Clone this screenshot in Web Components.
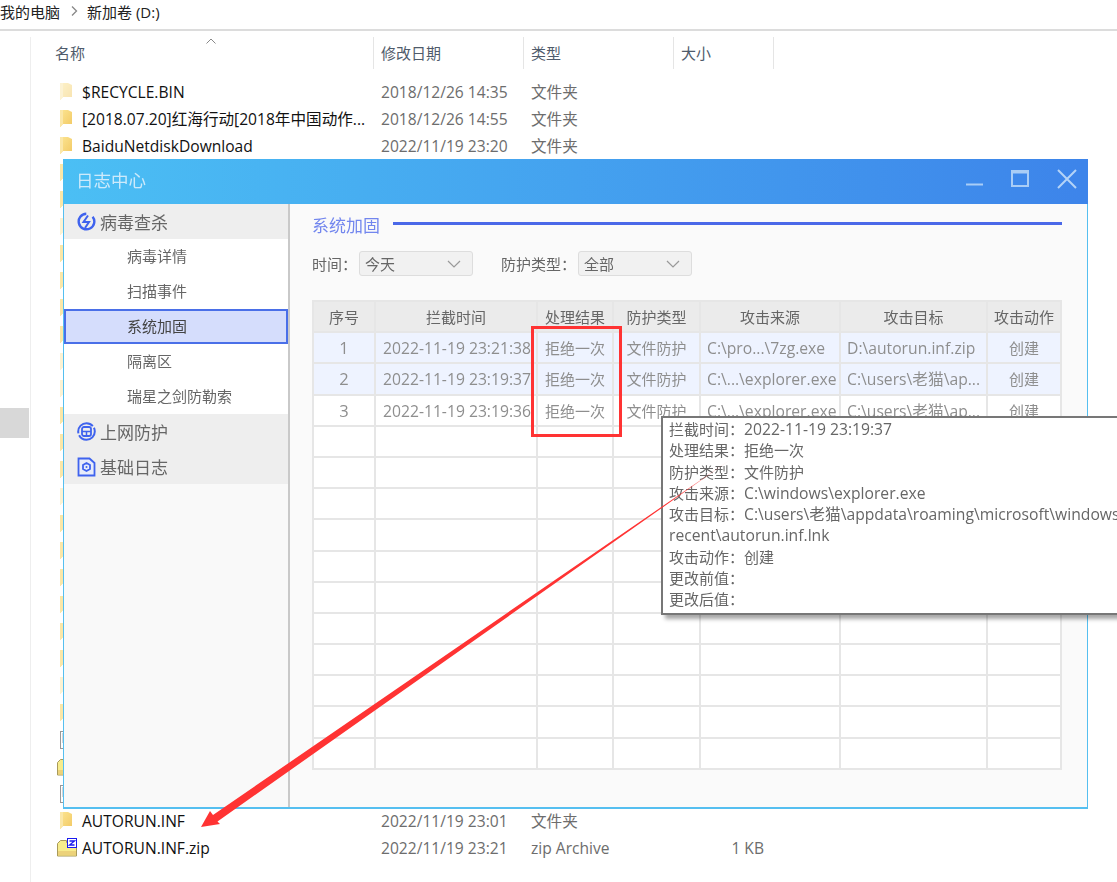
<!DOCTYPE html>
<html lang="zh-CN">
<head>
<meta charset="utf-8">
<title>日志中心</title>
<style>
  html, body { margin: 0; height: 882px; overflow: hidden; background: #fff; }
  body { position: relative; font-family: "Open Sans", "Noto Sans CJK SC", sans-serif; font-size: 15px; }
  log-tooltip span { font-size: 15.700px; }
</style>
</head>
<body>
<file-explorer>
  <file-row name="$RECYCLE.BIN" date="2018/12/26 14:35" type="文件夹" pale></file-row>
  <file-row name="[2018.07.20]红海行动[2018年中国动作..." date="2018/12/26 14:55" type="文件夹"></file-row>
  <file-row name="BaiduNetdiskDownload" date="2022/11/19 23:20" type="文件夹"></file-row>
  <file-row></file-row><file-row></file-row><file-row pale></file-row><file-row></file-row><file-row></file-row>
  <file-row></file-row><file-row></file-row><file-row pale></file-row><file-row pale></file-row><file-row></file-row>
  <file-row></file-row><file-row></file-row><file-row pale></file-row><file-row></file-row><file-row></file-row>
  <file-row></file-row><file-row></file-row><file-row></file-row><file-row></file-row><file-row pale></file-row>
  <file-row></file-row><file-row kind="doc"></file-row><file-row kind="zip"></file-row><file-row kind="doc"></file-row>
  <file-row name="AUTORUN.INF" date="2022/11/19 23:01" type="文件夹"></file-row>
  <file-row name="AUTORUN.INF.zip" date="2022/11/19 23:21" type="zip Archive" size="1 KB" kind="zip"></file-row>
</file-explorer>

<log-window title-text="日志中心">
  <log-sidebar slot="side"></log-sidebar>
  <log-panel heading="系统加固"></log-panel>
</log-window>

<log-tooltip>
  <div>拦截时间：<span>2022-11-19 23:19:37</span></div>
  <div>处理结果：拒绝一次</div>
  <div>防护类型：文件防护</div>
  <div>攻击来源：<span>C:\windows\explorer.exe</span></div>
  <div>攻击目标：<span>C:\users\老猫\appdata\roaming\microsoft\windows\</span></div>
  <div><span>recent\autorun.inf.lnk</span></div>
  <div>攻击动作：创建</div>
  <div>更改前值：</div>
  <div>更改后值：</div>
</log-tooltip>

<red-markup></red-markup>

<script>
const folderIcon = `
  <svg width="20" height="20" viewBox="0 0 20 20">
    <defs><linearGradient id="f" x1="0" x2="1" y1="0" y2="1"><stop offset="0" stop-color="#fce592"/><stop offset="1" stop-color="#f2c964"/></linearGradient></defs>
    <path d="M3 1h8l4 2v12h-9l-3 3z" fill="url(#f)"/>
    <path d="M3 1h3v14l-2.500 3h-.5z" fill="#fbe7a8"/>
  </svg>`
const docIcon = `
  <svg width="20" height="20" viewBox="0 0 20 20">
    <rect x="3.500" y="1.500" width="13" height="17" fill="#fff" stroke="#999"/>
    <path d="M5 4h2M5 6h2M5 8h2M5 10h2M5 12h2" stroke="#aaa"/>
  </svg>`
const zipIcon = `
  <svg width="20" height="20" viewBox="0 0 20 20">
    <path d="M.5 5.500l3-3h6v2h10v13.500h-19z" fill="#f7ec8c" stroke="#a89a5a"/>
    <path d="M1 13h18v4.500h-18z" fill="#ecd27a"/>
    <rect x="10.500" y=".5" width="9" height="9" fill="#fff" stroke="#1a1af0"/>
    <path d="M12.500 3h5l-5 4h5" fill="none" stroke="#1a1af0" stroke-width="1.300"/>
  </svg>`

class FileExplorer extends HTMLElement {
  connectedCallback() {
    this.attachShadow({ mode: "open" }).innerHTML = `
      <style>
        :host { display: block; height: 882px; overflow: hidden; }
        .crumb { height: 20px; padding: 1px 0 8px; border-bottom: 2px solid #dcdcdc; display: flex; align-items: center; gap: 9px; color: #222; }
        .crumb svg { display: block; margin-right: -1px; }
        .wrap { display: flex; }
        nav { width: 31px; box-sizing: border-box; border-right: 1px solid #eee; margin-top: 6px; height: 860px; padding-top: 371px; }
        nav i { display: block; width: 29px; height: 30px; background: #d8d8d8; }
        main { flex: 1; }
        .cols { display: flex; height: 32px; margin-top: 6px; color: #4f5b6b; }
        .cols span { box-sizing: border-box; border-right: 1px solid #e5e5e5; padding-left: 7px; line-height: 32px; position: relative; }
        .cols span:first-child { width: 343px; padding-left: 24px; }
        .cols span:nth-child(2), .cols span:nth-child(3) { width: 150px; }
        .cols span:nth-child(4) { width: 100px; }
        .cols svg { position: absolute; left: 175px; top: 1px; }
        .rows { padding-top: 9px; }
      </style>
      <div class="crumb">
        <span>我的电脑</span>
        <svg width="10" height="12" viewBox="0 0 10 12"><path d="M3 1.500l4.500 4.500-4.500 4.500" fill="none" stroke="#888" stroke-width="1.300"/></svg>
        <span>新加卷 (D:)</span>
      </div>
      <div class="wrap">
        <nav><i></i></nav>
        <main>
          <div class="cols">
            <span>名称<svg width="10" height="6" viewBox="0 0 10 6"><path d="M.5 5.500l4.500-4.500 4.500 4.500" fill="none" stroke="#888"/></svg></span>
            <span>修改日期</span><span>类型</span><span>大小</span>
          </div>
          <div class="rows"><slot></slot></div>
        </main>
      </div>`
  }
}
customElements.define("file-explorer", FileExplorer)

class FileRow extends HTMLElement {
  connectedCallback() {
    const a = n => this.getAttribute(n) || ""
    const icon = a("kind") === "doc" ? docIcon : a("kind") === "zip" ? zipIcon : folderIcon
    this.attachShadow({ mode: "open" }).innerHTML = `
      <style>
        :host { display: grid; grid-template-columns: 20px 304px 150px 150px 83px; height: 27px; align-items: center; margin-left: 26px; color: #6d6d6d; font-size: 15.600px; }
        .ic { height: 20px; ${this.hasAttribute("pale") ? "opacity:.5;" : ""} }
        .name { color: #111; padding-left: 5px; white-space: nowrap; }
        .size { text-align: right; }
      </style>
      <div class="ic">${icon}</div>
      <div class="name">${a("name")}</div>
      <div>${a("date")}</div>
      <div>${a("type")}</div>
      <div class="size">${a("size")}</div>`
  }
}
customElements.define("file-row", FileRow)

class LogWindow extends HTMLElement {
  connectedCallback() {
    this.attachShadow({ mode: "open" }).innerHTML = `
      <style>
        :host { display: flex; flex-direction: column; position: absolute; left: 63px; top: 159px; width: 1025px; height: 650px; box-sizing: border-box; border: solid #55bff0; border-width: 0 1px 2px 1px; background: #fafafa; filter: blur(.35px); }
        header { height: 45px; box-sizing: border-box; padding: 0 0 5px 13px; flex: none; margin: 0 -1px; display: flex; align-items: center; background: linear-gradient(90deg, #4bbff4, #3d84ea); color: #cdeafb; font-size: 17.500px; }
        header b { font-weight: 400; flex: 1; }
        header svg { display: block; }
        .btns { display: flex; align-items: center; gap: 26px; padding-right: 11px; }
        .body { flex: 1; display: flex; min-height: 0; }
      </style>
      <header>
        <b>${this.getAttribute("title-text")}</b>
        <div class="btns">
          <svg width="19" height="20" viewBox="0 0 19 20"><path d="M0 15.500h17" stroke="#a9cdf6" stroke-width="2"/></svg>
          <svg width="20" height="20" viewBox="0 0 20 20"><path d="M1 2h16v15h-16z" fill="none" stroke="#a9cdf6" stroke-width="2"/><path d="M1 3h16" stroke="#a9cdf6" stroke-width="3"/></svg>
          <svg width="20" height="20" viewBox="0 0 20 20"><path d="M1 1l18 18M19 1l-18 18" stroke="#b4d3f7" stroke-width="2"/></svg>
        </div>
      </header>
      <div class="body"><slot name="side"></slot><slot></slot></div>`
  }
}
customElements.define("log-window", LogWindow)

class LogSidebar extends HTMLElement {
  connectedCallback() {
    const blue = "#3f63ee"
    const item = (t, on) => `<div class="item${on ? " on" : ""}">${t}</div>`
    this.attachShadow({ mode: "open" }).innerHTML = `
      <style>
        :host { display: block; width: 226px; flex: none; box-sizing: border-box; border-right: 2px solid #c9c9c9; background: #f9f9f9; color: #666; }
        .grp { background: #eee; }
        .head { height: 35px; display: flex; align-items: center; gap: 4px; padding-left: 13px; font-size: 17px; }
        .head svg { display: block; }
        .items { background: #fff; }
        .item { height: 35px; line-height: 34px; box-sizing: border-box; padding-left: 63px; }
        .on { background: #d5ddfc; border: 2px solid #4a6fe8; line-height: 31px; padding-left: 61px; color: #444; }
      </style>
      <div class="grp"><div class="head">
        <svg width="19" height="19" viewBox="0 0 19 19"><path d="M6 2.500a7.800 7.800 0 1 0 7 0" fill="none" stroke="${blue}" stroke-width="2.400" transform="rotate(25 9.500 9.500)"/><path d="M11 3.500l-4.500 6.500h5.500l-4 6" fill="none" stroke="${blue}" stroke-width="2"/></svg>
        病毒查杀</div></div>
      <div class="items">
        ${item("病毒详情")}${item("扫描事件")}${item("系统加固", true)}${item("隔离区")}${item("瑞星之剑防勒索")}
      </div>
      <div class="grp">
        <div class="head"><svg width="19" height="19" viewBox="0 0 19 19"><circle cx="9.500" cy="9.500" r="8.300" fill="none" stroke="${blue}" stroke-width="2" stroke-dasharray="22 2 22 2"/><rect x="5" y="5" width="9" height="9" rx="2" fill="none" stroke="${blue}" stroke-width="1.800"/><path d="M5 9.500h9M9.500 9.500v4" stroke="${blue}" stroke-width="1.500"/></svg>上网防护</div>
        <div class="head"><svg width="19" height="20" viewBox="0 0 19 20"><path d="M1.500 1.500h11l5 4.500v12.500h-16z" fill="#e8ecfa" stroke="${blue}" stroke-width="1.800"/><path d="M9.500 6l3.500 2v4l-3.500 2-3.500-2v-4z" fill="none" stroke="${blue}" stroke-width="1.800"/><circle cx="9.500" cy="10" r="1" fill="${blue}"/></svg>基础日志</div>
      </div>`
  }
}
customElements.define("log-sidebar", LogSidebar)

class LogSelect extends HTMLElement {
  connectedCallback() {
    this.attachShadow({ mode: "open" }).innerHTML = `
      <style>
        :host { display: flex; align-items: center; justify-content: space-between; width: 114px; height: 25px; box-sizing: border-box; border: 1px solid #ddd; border-radius: 3px; background: #f1f1f1; padding: 0 11px 0 5px; color: #666; }
        svg { display: block; }
      </style>
      <span><slot></slot></span>
      <svg width="14" height="8" viewBox="0 0 14 8"><path d="M1 1l6 6 6-6" fill="none" stroke="#999" stroke-width="1.200"/></svg>`
  }
}
customElements.define("log-select", LogSelect)

class LogPanel extends HTMLElement {
  connectedCallback() {
    this.attachShadow({ mode: "open" }).innerHTML = `
      <style>
        :host { display: block; flex: 1; padding: 8px 25px 0 22px; color: #666; min-width: 0; }
        .h { display: flex; align-items: center; gap: 13px; height: 24px; color: #7286ee; font-size: 17px; }
        .h i { flex: 1; height: 3px; background: #4a68e8; margin-top: -1px; }
        .f { display: flex; align-items: center; height: 25px; margin: 15px 0 24px; }
        .f span { margin-right: 2px; }
        .f log-select { margin-right: 28px; }
      </style>
      <div class="h">${this.getAttribute("heading")}<i></i></div>
      <div class="f"><span>时间：</span><log-select>今天</log-select><span>防护类型：</span><log-select>全部</log-select></div>
      <log-table></log-table>`
  }
}
customElements.define("log-panel", LogPanel)

class LogTable extends HTMLElement {
  connectedCallback() {
    const heads = ["序号", "拦截时间", "处理结果", "防护类型", "攻击来源", "攻击目标", "攻击动作"]
    const rows = [
      ["1", "2022-11-19 23:21:38", "拒绝一次", "文件防护", "C:\\pro...\\7zg.exe", "D:\\autorun.inf.zip", "创建"],
      ["2", "2022-11-19 23:19:37", "拒绝一次", "文件防护", "C:\\...\\explorer.exe", "C:\\users\\老猫\\ap...", "创建"],
      ["3", "2022-11-19 23:19:36", "拒绝一次", "文件防护", "C:\\...\\explorer.exe", "C:\\users\\老猫\\ap...", "创建"],
    ]
    let html = heads.map(h => `<div class="c th">${h}</div>`).join("")
    rows.forEach((r, i) => {
      html += r.map((t, j) => `<div class="c${i < 2 ? " alt" : ""}${j == 0 ? " n" : ""}${j == 1 ? " l" : ""}${j == 4 || j == 5 ? " l p" : ""}">${t}</div>`).join("")
    })
    html += '<div class="c"></div>'.repeat(11 * 7)
    this.attachShadow({ mode: "open" }).innerHTML = `
      <style>
        :host { display: grid; grid-template-columns: 62px 162px 76px 87px 140px 147px 74px; grid-auto-rows: 31.200px; width: 750px; box-sizing: border-box; border: solid #e6e6e6; border-width: 2px 0 0 2px; color: #8e8e8e; }
        .c { box-sizing: border-box; border: solid #e6e6e6; border-width: 0 2px 2px 0; background: #fff; text-align: center; white-space: nowrap; overflow: hidden; line-height: 30.500px; }
        .th { background: #ebebeb; color: #666; }
        .alt { background: #eef3ff; }
        .n { font-size: 16.500px; }
        .l { text-align: left; padding-left: 7px; font-size: 15.700px; }
        .p { padding-left: 6px; }
      </style>
      ${html}`
  }
}
customElements.define("log-table", LogTable)

class LogTooltip extends HTMLElement {
  connectedCallback() {
    this.attachShadow({ mode: "open" }).innerHTML = `
      <style>
        :host { display: block; position: absolute; left: 661px; top: 416px; width: 470px; height: 199px; box-sizing: border-box; border: 2px solid #777; background: #fff; box-shadow: 4px 4px 4px rgba(0,0,0,.35); color: #666; padding: 1px 0 0 6px; line-height: 21.300px; white-space: nowrap; filter: blur(.3px); }
      </style>
      <slot></slot>`
  }
}
customElements.define("log-tooltip", LogTooltip)

class RedMarkup extends HTMLElement {
  connectedCallback() {
    this.attachShadow({ mode: "open" }).innerHTML = `
      <style>
        :host { display: block; position: absolute; inset: 0; pointer-events: none; }
        svg { display: block; }
      </style>
      <svg width="1117" height="882" viewBox="0 0 1117 882">
        <defs><linearGradient id="a" gradientUnits="userSpaceOnUse" x1="737" y1="455" x2="600" y2="550"><stop offset="0" stop-color="#f33" stop-opacity="0"/><stop offset=".5" stop-color="#f33"/></linearGradient></defs>
        <rect x="532.500" y="327.500" width="88" height="108" fill="none" stroke="#f33" stroke-width="3"/>
        <path d="M737 455L217.500 821.500 220 824 201 827 210 811 213 815z" fill="url(#a)"/>
      </svg>`
  }
}
customElements.define("red-markup", RedMarkup)
</script>
</body>
</html>
